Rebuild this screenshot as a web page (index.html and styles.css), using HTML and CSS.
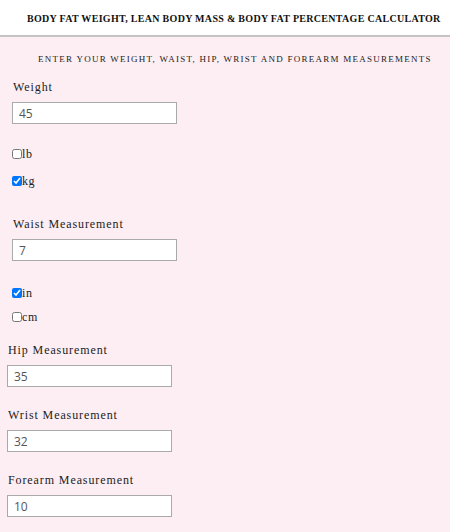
FILE: index.html
```html
<!DOCTYPE html>
<html>
<head>
<meta charset="utf-8">
<link rel="stylesheet" href="styles.css">
</head>
<body>
<header class="top">
  <h1 class="title">BODY FAT WEIGHT, LEAN BODY MASS &amp; BODY FAT PERCENTAGE CALCULATOR</h1>
</header>
<main class="panel">
  <h2 class="subtitle">ENTER YOUR WEIGHT, WAIST, HIP, WRIST AND FOREARM MEASUREMENTS</h2>
  <div class="group indent first">
    <label class="lbl">Weight</label>
    <input class="field" type="text" value="45">
    <div class="checks wide">
      <label class="chk"><input type="checkbox">lb</label>
      <label class="chk"><input type="checkbox" checked>kg</label>
    </div>
  </div>
  <div class="group indent after-checks">
    <label class="lbl">Waist Measurement</label>
    <input class="field" type="text" value="7">
    <div class="checks narrow">
      <label class="chk"><input type="checkbox" checked>in</label>
      <label class="chk"><input type="checkbox">cm</label>
    </div>
  </div>
  <div class="group after-checks2">
    <label class="lbl">Hip Measurement</label>
    <input class="field" type="text" value="35">
  </div>
  <div class="group">
    <label class="lbl">Wrist Measurement</label>
    <input class="field" type="text" value="32">
  </div>
  <div class="group">
    <label class="lbl">Forearm Measurement</label>
    <input class="field" type="text" value="10">
  </div>
</main>
</body>
</html>
```
FILE: styles.css
```css
html, body {
  margin: 0;
  padding: 0;
  background: #fdeef3;
  font-family: "Liberation Serif", "DejaVu Serif", serif;
  color: #222;
}
.top {
  background: #fff;
  height: 35px;
  border-bottom: 2px solid #c4c4c4;
  box-sizing: content-box;
  display: flex;
  align-items: center;
  padding-left: 27px;
}
.title {
  margin: 1px 0 0 0;
  font-size: 10px;
  font-weight: bold;
  letter-spacing: 0.3px;
  white-space: nowrap;
  color: #111;
}
.panel {
  padding: 0 7px 20px 7px;
  display: flex;
  flex-direction: column;
}
.subtitle {
  margin: 16px 0 0 31px;
  font-size: 9px;
  line-height: 12px;
  font-weight: normal;
  letter-spacing: 1.25px;
  white-space: nowrap;
  color: #222;
}
.group {
  display: flex;
  flex-direction: column;
  align-items: flex-start;
  margin-top: 20px;
}
.group.first {
  margin-top: 14px;
}
.group.after-checks {
  margin-top: 27px;
}
.group.after-checks2 {
  margin-top: 17px;
}
.indent {
  padding-left: 5px;
}
.lbl {
  font-size: 12px;
  letter-spacing: 0.9px;
  margin-left: 1px;
  line-height: 16px;
}
.field {
  margin-top: 7px;
  width: 165px;
  height: 22px;
  box-sizing: border-box;
  border: 1px solid #aaa;
  background: #fff;
  padding: 0 6px;
  font-family: "Open Sans", "DejaVu Sans", sans-serif;
  font-size: 12px;
  color: #555;
  outline: none;
}
.checks {
  display: flex;
  flex-direction: column;
}
.checks.wide {
  margin-top: 22px;
  gap: 11px;
}
.checks.narrow {
  margin-top: 24px;
  gap: 8px;
}
.chk {
  display: flex;
  align-items: center;
  font-size: 12px;
  line-height: 16px;
  letter-spacing: 0.6px;
}
.chk input {
  margin: 0;
  width: 10px;
  height: 10px;
}
```
